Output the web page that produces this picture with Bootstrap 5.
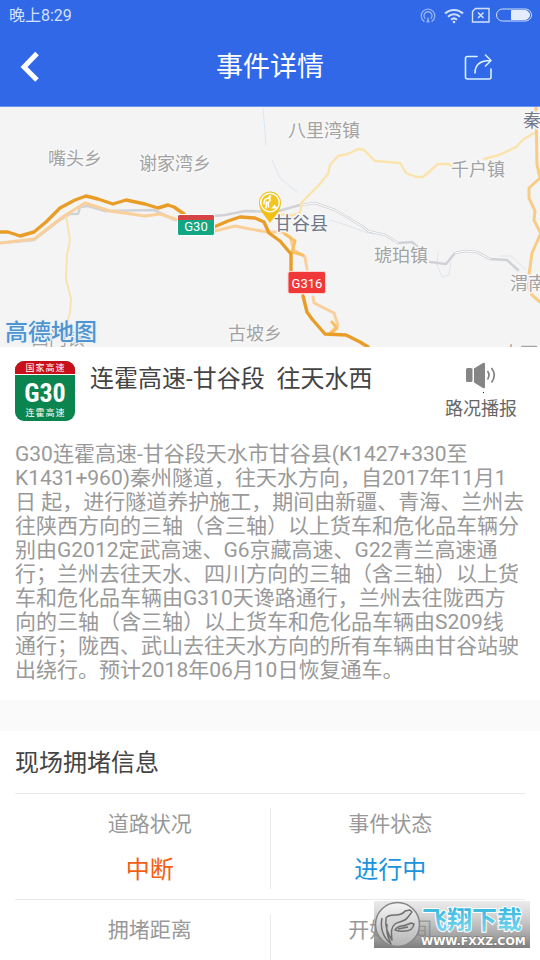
<!DOCTYPE html>
<html lang="zh-CN">
<head>
<meta charset="utf-8">
<meta name="viewport" content="width=device-width, initial-scale=1">
<title>事件详情</title>
<link href="https://cdn.jsdelivr.net/npm/bootstrap@5.3.0/dist/css/bootstrap.min.css" rel="stylesheet">
<style>
  body { font-family: Roboto, "Noto Sans CJK SC", sans-serif; color: #444; background: #fff; }
  .app-head { background: #3068e8; color: #fff; border-bottom: 1px solid #6b92ee; }
  .status-line { height: 32px; padding: 0 8px 0 9px; font-size: 16px; color: #d3e1fb; }
  .title-line { height: 74px; padding: 0 20px 4px; }
  .title-line h1 { font-size: 27px; line-height: 32px; font-weight: 400; }
  .icon-btn { width: 56px; height: 32px; }
  .map-area { height: 240px; background: #f4f4f4; }
  .pad-x { padding-left: 15px; padding-right: 15px; }
  .event-top { padding-top: 14px; gap: 15px; }
  .sign { width: 60px; height: 60px; }
  .event-name { font-size: 24px; line-height: 36px; font-weight: 400; }
  .speak-btn { font-size: 18px; line-height: 24px; color: #666; margin-right: 8px; }
  .speak-btn svg { margin-bottom: 4px; }
  .event-text { font-size: 21px; line-height: 24px; color: #999; padding-top: 21px; padding-bottom: 18px; }
  .gap-band { height: 31px; background: #fafafa; }
  .info-head { font-size: 24px; line-height: 32px; font-weight: 400; padding: 16px 0 14px; }
  .info-row { border-top: 1px solid #e9e9e9; padding: 14px 15px 10px; }
  .info-cell { height: 81px; font-size: 21px; line-height: 32px; color: #999; }
  .info-cell + .info-cell { border-left: 1px solid #e9e9e9; }
  .info-cell dd { font-size: 24px; padding-top: 14px; }
  .info-cell-short { height: 46px; }
  .val-orange { color: #f06010; }
  .val-blue { color: #1994dc; }
  .stamp { right: 10px; bottom: 12px; width: 156px; height: 47px; }
</style>
<script src="https://cdn.jsdelivr.net/npm/bootstrap@5.3.0/dist/js/bootstrap.bundle.min.js"></script>
</head>
<body class="d-flex flex-column min-vh-100">

<header class="app-head">
  <div class="status-line d-flex align-items-center justify-content-between">
    <span>晚上8:29</span>
    <svg width="112" height="18" viewBox="0 0 112 18" fill="none" stroke="#d3e1fb" aria-hidden="true">
      <g stroke="#94b3f3" stroke-width="1.3">
        <path d="M4.400 14.600a6.800 6.800 0 1 1 7.200 0"/>
        <path d="M5.400 11.800a4 4 0 1 1 5.200 0"/>
        <path d="M8 9.500 6.300 15.600h3.400z" fill="#94b3f3" stroke="none"/>
      </g>
      <g stroke-width="2">
        <path d="M25 6.500a13 13 0 0 1 18 0"/>
        <path d="M28 9.700a8.600 8.600 0 0 1 12 0"/>
        <path d="M31 12.700a4.500 4.500 0 0 1 6 0"/>
        <circle cx="34" cy="15" r="1.300" fill="#d3e1fb" stroke="none"/>
      </g>
      <path d="M55.500 1.500H69V15H52.500V4.500z" stroke-width="1.400"/>
      <path d="M58 5.500l5.500 5.500M63.500 5.500 58 11" stroke-width="1.500"/>
      <rect x="76.500" y="2" width="35" height="12" rx="6"/>
      <path d="M91.500 3.500H105a4.500 4.500 0 0 1 0 9H91.500z" fill="#e3ecfd" stroke="#e3ecfd"/>
    </svg>
  </div>
  <div class="title-line d-flex align-items-center justify-content-between">
    <button type="button" class="btn p-0 border-0 icon-btn d-flex" aria-label="返回">
      <svg width="20" height="32" viewBox="0 0 20 32" fill="none" stroke="#fff" stroke-width="5" aria-hidden="true"><path d="M17 2.500 4 16 17 29"/></svg>
    </button>
    <h1 class="m-0">事件详情</h1>
    <button type="button" class="btn p-0 border-0 icon-btn d-flex align-items-center" aria-label="分享">
      <svg width="28" height="28" viewBox="0 0 28 28" fill="none" stroke="#d8f0ff" stroke-width="1.600" stroke-linejoin="round" stroke-linecap="round" aria-hidden="true">
        <path d="M13 3.500H3.500q-2 0-2 2V24q0 2 2 2H25q2 0 2-2v-8"/>
        <path d="M11 20c0-7 4-12.500 15.500-12.500M21.500 2l5.500 5.500-5.500 5.500"/>
      </svg>
    </button>
  </div>
</header>

<main class="flex-grow-1 d-flex flex-column">
  <section class="map-area overflow-hidden" aria-label="地图">
    <svg width="100%" height="100%" viewBox="0 107 540 240" preserveAspectRatio="xMidYMid slice" class="d-block" fill="none" stroke-linecap="round" stroke-linejoin="round">
      <!-- rivers -->
      <path d="M263 108 266 145 M272 160 280 178 297 192 M330 220 346 225 368 233 375 234M438 252 437 265 442 277 449 275 451 262M500 256 511 256 525 269" stroke="#dce6ef" stroke-width="1"/>
      <!-- railway -->
      <path d="M2 243 34 240 60 220 70 214 78 214 80 207 88 206 105 211 154 210 175 220M213 216 225 215 245 211 275 212 300 205 315 203 335 210 362 226 368 231 385 235 398 243 412 242 420 249M430 262 446 264 455 253 465 251 477 252 490 259 507 260 518 270" stroke="#d0d2d6" stroke-width="2.600"/>
      <path d="M300 205 315 203 335 210 362 226 368 231 385 235 398 243M455 253 465 251 477 252 490 259" stroke="#fff" stroke-width="1"/>
      <!-- country roads -->
      <path d="M66 216 70 240 67 255 66 279 71 299 70 313 67 322" stroke="#f9e3b0" stroke-width="2"/>
      <path d="M302 202 318 186 328 174 330 165 338 156 348 154 358 149 364 150 375 161 400 163 406 173 416 177 423 177 438 164 449 164 455 169M484 159 499 155 516 147 524 139 534 133M274 213 290 216 300 213 302 202" stroke="#fbe4ab" stroke-width="2.400"/>
      <!-- secondary roads -->
      <path d="M0 243 34 239 64 216 85 203 110 211 145 216 160 214 178 220M215 231 235 226 250 229 268 232 282 232 290 237 294 250 305 257 307 269M313 297 314 303 322 307 334 313 338 325 331 332" stroke="#fad09a" stroke-width="3"/>
      <path d="M536 106 537 165 540 178 529 188 529 198 535 211 534 220 540 232M540 235 532 253 529 275 527 285 532 295 540 302" stroke="#f9cc86" stroke-width="3"/>
      <path d="M285 234 295 241 292 252 303 255M332 322 337 328 330 334" stroke="#f8bf63" stroke-width="3"/>
      <!-- expressways -->
      <path d="M0 232 8 232 20 236 34 232 46 222 60 208 75 200 86 196 98 199 113 204 126 200 145 204 158 208 168 205 174 207 184 214M214 227 228 221 240 217 255 218 264 222 269 233 280 241 291 254 291 270M303 296 307 312 312 319 325 334 346 335 360 342 368 347" stroke="#e99d26" stroke-width="3.400"/>

      <g font-size="18" fill="#a3a3a3" stroke="#f8f8f8" stroke-width="3" paint-order="stroke">
        <text x="48" y="165">嘴头乡</text>
        <text x="139" y="170">谢家湾乡</text>
        <text x="288" y="137">八里湾镇</text>
        <text x="451" y="176">千户镇</text>
        <text x="374" y="262">琥珀镇</text>
        <text x="510" y="290">渭南镇</text>
        <text x="228" y="340">古坡乡</text>
        <text x="31" y="345">西门镇</text>
        <text x="502" y="360">大石镇</text>
        <g fill="#70788a"><text x="523" y="127">秦安县</text><text x="274" y="230">甘谷县</text></g>
      </g>
      <text x="5" y="340" font-size="23" font-weight="500" fill="#4f94cf" stroke="#e8f2fa" stroke-width="2" paint-order="stroke">高德地图</text>

      <rect x="177.500" y="214.500" width="37" height="21" rx="2" fill="#12a782" stroke="#fff"/>
      <path d="M178 220v-3q0-2 2-2h32q2 0 2 2v3z" fill="#d84444"/>
      <rect x="288" y="271.500" width="37.500" height="22" rx="2" fill="#f03838" stroke="#fbd5d0"/>
      <g fill="#fff" font-size="13" text-anchor="middle"><text x="196" y="231">G30</text><text x="307" y="288">G316</text></g>

      <path d="M270 223C266 217 259 211 259 202.500a11 11 0 0 1 22 0C281 211 274 217 270 223z" fill="#f2bf15"/>
      <circle cx="270" cy="202.500" r="9.300" fill="#f3c521" stroke="#fff" stroke-width="1.500"/>
      <path d="M264 204q0-5 3-5.500l2.500-1 .5 3-2 2.500.5 4M266.500 202 266 208" stroke="#fff" stroke-width="1.600"/>
      <circle cx="270" cy="196.500" r="1.300" fill="#fff"/>
      <path d="M271 208.500l3.500-4 3 4z" fill="#fff"/>
    </svg>
  </section>

  <section class="pad-x">
    <div class="event-top d-flex align-items-start">
      <svg class="sign flex-shrink-0" viewBox="0 0 60 60" role="img" aria-label="国家高速 G30 连霍高速">
        <rect width="60" height="60" rx="9" fill="#0b8550"/>
        <path d="M0 13V9a9 9 0 0 1 9-9h42a9 9 0 0 1 9 9v4z" fill="#c8101a"/>
        <path d="M0 13.500h60" stroke="#fff" stroke-width="1.200"/>
        <g fill="#fff" text-anchor="middle">
          <g font-size="9"><text x="15" y="10">国</text><text x="25" y="10">家</text><text x="35" y="10">高</text><text x="45" y="10">速</text></g>
          <text x="30" y="41" font-size="26" font-weight="700" font-family="'Roboto Condensed', 'Noto Sans CJK SC', sans-serif">G30</text>
          <g font-size="9"><text x="15" y="55">连</text><text x="25" y="55">霍</text><text x="35" y="55">高</text><text x="45" y="55">速</text></g>
        </g>
      </svg>
      <h2 class="event-name m-0 flex-grow-1">连霍高速-甘谷段&nbsp; 往天水西</h2>
      <button type="button" class="speak-btn btn p-0 border-0 d-flex flex-column align-items-center">
        <svg width="32" height="32" viewBox="0 0 32 32" fill="#858585" aria-hidden="true">
          <rect x="1" y="7" width="6.500" height="14" rx="1.500"/>
          <path d="M9 7.500 18 2q2-1 2 1v23q0 2-2 1l-9-5.500z"/>
          <path d="M22.500 10q3 4 0 8.500M26.500 7q5.500 7 0 14.500" fill="none" stroke="#858585" stroke-width="1.800"/>
          <rect x="18" y="31" width="1" height="1" fill="#222"/>
        </svg>
        路况播报
      </button>
    </div>
    <p class="event-text m-0">G30连霍高速-甘谷段天水市甘谷县(K1427+330至<br>K1431+960)秦州隧道，往天水方向，自2017年11月1<br>日 起，进行隧道养护施工，期间由新疆、青海、兰州去往陕西方向的三轴（含三轴）以上货车和危化品车辆分别由G2012定武高速、G6京藏高速、G22青兰高速通行；兰州去往天水、四川方向的三轴（含三轴）以上货车和危化品车辆由G310天谗路通行，兰州去往陇西方向的三轴（含三轴）以上货车和危化品车辆由S209线<br>通行；陇西、武山去往天水方向的所有车辆由甘谷站驶出绕行。预计2018年06月10日恢复通车。</p>
  </section>

  <div class="gap-band"></div>

  <section class="pad-x flex-grow-1 position-relative">
    <h2 class="info-head m-0">现场拥堵信息</h2>
    <div class="info-row">
      <div class="row g-0 text-center">
        <dl class="col info-cell m-0"><dt class="fw-normal">道路状况</dt><dd class="m-0 val-orange">中断</dd></dl>
        <dl class="col info-cell m-0"><dt class="fw-normal">事件状态</dt><dd class="m-0 val-blue">进行中</dd></dl>
      </div>
    </div>
    <div class="info-row pb-0">
      <div class="row g-0 text-center">
        <dl class="col info-cell info-cell-short m-0"><dt class="fw-normal">拥堵距离</dt></dl>
        <dl class="col info-cell info-cell-short m-0"><dt class="fw-normal">开始时间</dt></dl>
      </div>
    </div>
    <svg class="stamp position-absolute" viewBox="0 0 156 47" role="img" aria-label="飞翔下载 WWW.FXXZ.COM">
      <defs>
        <linearGradient id="stampBack" x2="0" y2="1"><stop offset="0" stop-color="#bbb" stop-opacity=".3"/><stop offset="1" stop-color="#777" stop-opacity=".95"/></linearGradient>
        <linearGradient id="stampText" x2="0" y2="1"><stop offset="0" stop-color="#35b5dc"/><stop offset="1" stop-color="#7fdcf3"/></linearGradient>
        <linearGradient id="stampDisc" x2="0" y2="1"><stop offset="0" stop-color="#f6f6f6"/><stop offset="1" stop-color="#b9b9b9"/></linearGradient>
      </defs>
      <rect width="156" height="47" fill="url(#stampBack)"/>
      <circle cx="23.500" cy="23.500" r="22" fill="url(#stampDisc)" fill-opacity=".9" stroke="#858585" stroke-width="1.500"/>
      <path d="M8 17c-2 10 1 19 9 26-4-8-5-13-4-20M12 17c-1 8 1 15 6 22-1-8-1-13 3-16 4-3 10-2 13-7l4-5-2-2-5 1c-2 3-5 4-10 4-5 0-8 1-9 3z" fill="#d6d6d6" fill-opacity=".6" stroke="#707070" stroke-width="1.500" stroke-linejoin="round"/>
      <path d="M21 29c3-5 7-3 11-5l5-2 3 1c-1 6-5 7-9 7-4 1-7 0-10-1zM24 28l10-2" fill="#ccc" stroke="#707070" stroke-width="1.500" stroke-linejoin="round"/>
      <text x="48" y="28" font-size="25" font-weight="700" fill="url(#stampText)" stroke="#fff" stroke-width="2" paint-order="stroke">飞翔下载</text>
      <text x="47" y="44" font-size="11" font-weight="700" font-family="'DejaVu Sans', sans-serif" fill="#fff" stroke="#777" stroke-width="1" paint-order="stroke">WWW.FXXZ.COM</text>
    </svg>
  </section>
</main>
</body>
</html>
